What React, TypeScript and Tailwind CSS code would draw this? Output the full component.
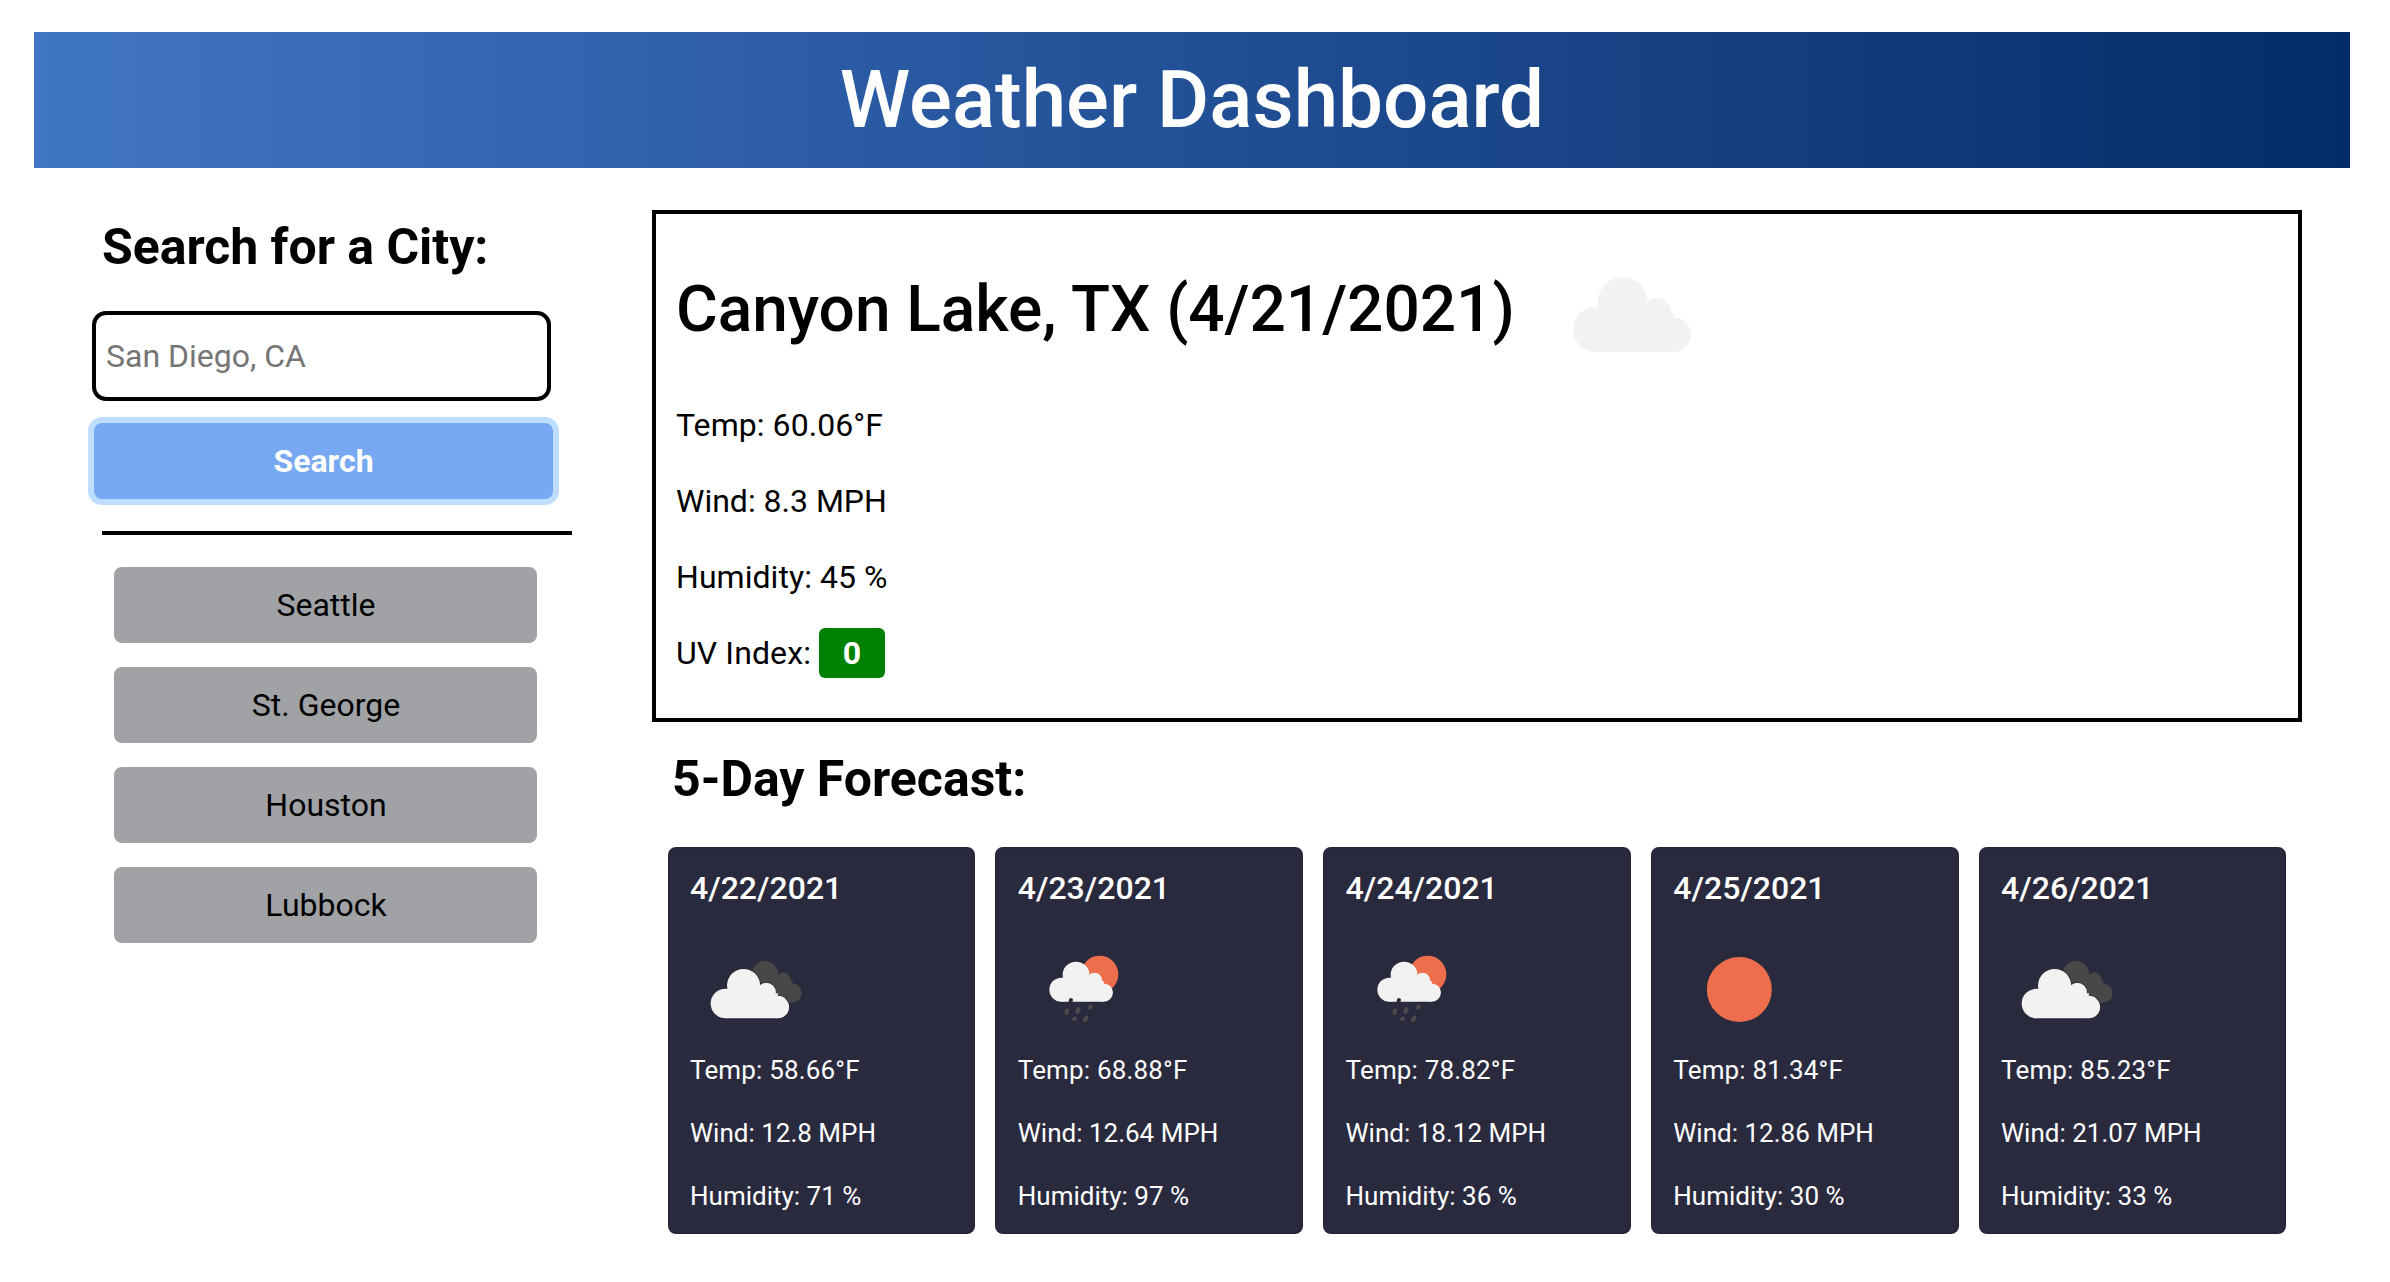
type Sky = 'clouds' | 'rain' | 'clear';

interface Day {
  date: string;
  sky: Sky;
  temp: string;
  wind: string;
  humidity: string;
}

const cities = ['Seattle', 'St. George', 'Houston', 'Lubbock'];

const forecast: Day[] = [
  { date: '4/22/2021', sky: 'clouds', temp: '58.66', wind: '12.8', humidity: '71' },
  { date: '4/23/2021', sky: 'rain', temp: '68.88', wind: '12.64', humidity: '97' },
  { date: '4/24/2021', sky: 'rain', temp: '78.82', wind: '18.12', humidity: '36' },
  { date: '4/25/2021', sky: 'clear', temp: '81.34', wind: '12.86', humidity: '30' },
  { date: '4/26/2021', sky: 'clouds', temp: '85.23', wind: '21.07', humidity: '33' },
];

// Cloud silhouette on a 355 x 224 grid.
function CloudShape() {
  return (
    <>
      <circle cx="67" cy="157" r="67" />
      <circle cx="149" cy="75" r="75" />
      <circle cx="252" cy="105" r="43" />
      <circle cx="304" cy="173" r="51" />
      <path d="M67 110H304V224H67Z" />
    </>
  );
}

function WeatherIcon({ sky }: { sky: Sky }) {
  return (
    <svg viewBox="0 0 396 327" className="block h-[109px] w-[132px]">
      {sky === 'clouds' && (
        <>
          <g fill="#484848" transform="translate(145 93) scale(.535 .555)">
            <CloudShape />
          </g>
          <g fill="#2b2b33" stroke="#2b2b33" strokeWidth="7" transform="translate(62 117) scale(.663 .66)">
            <circle cx="149" cy="75" r="75" />
            <circle cx="252" cy="105" r="43" />
            <circle cx="304" cy="173" r="51" />
          </g>
          <g fill="#f2f2f0" transform="translate(62 117) scale(.663 .66)">
            <CloudShape />
          </g>
        </>
      )}
      {sky === 'rain' && (
        <g transform="translate(38 0)">
          <circle cx="207" cy="133" r="56" fill="#ec6e4c" />
          <g fill="#f2f2f2" transform="translate(56 95) scale(.538 .536)">
            <CloudShape />
          </g>
          <g stroke="#4b4b4b" strokeWidth="12" strokeLinecap="round">
            <path d="M121 210L120 212" stroke="#2e2e2e" />
            <path d="M110 241L107 249" />
            <path d="M144 237L140 245" />
            <path d="M180 230L178 233" />
            <path d="M133 265L131 267" />
            <path d="M168 262L163 270" />
          </g>
        </g>
      )}
      {sky === 'clear' && <circle cx="199" cy="178.500" r="97.500" fill="#ec6e4c" />}
    </svg>
  );
}

export default function App() {
  return (
    <div className="h-[1282px] w-[2390px] overflow-hidden bg-white pt-8 pr-10 pl-[34px] font-['Roboto',sans-serif] text-[32px] text-black">
      <header className="flex h-[136px] items-center justify-center bg-linear-to-r from-[#4176c5] to-[#042c69]">
        <h1 className="text-[80px] leading-[94px] font-medium text-white">Weather Dashboard</h1>
      </header>

      <div className="flex">
        <aside className="w-[618px] pt-[49px] pl-[58px]">
          <h2 className="ml-[10px] text-[50px] leading-[60px] font-bold tracking-[-0.04px]">Search for a City:</h2>
          <input
            className="mt-[34px] block h-[90px] w-[459px] rounded-[14px] border-4 border-black bg-white px-[10px] placeholder:text-[#757575]"
            placeholder="San Diego, CA"
          />
          <button className="mt-[22px] ml-[2px] block h-[76px] w-[459px] rounded-lg bg-[#77a8f2] font-bold text-white ring-6 ring-[#bfdeff]">
            Search
          </button>
          <hr className="mt-8 ml-[10px] w-[470px] border-t-4 border-black" />
          <div className="mt-8 ml-[22px] flex w-[423px] flex-col gap-6">
            {cities.map((city) => (
              <button key={city} className="h-[76px] rounded-lg bg-[#a1a2a6] pl-px">
                {city}
              </button>
            ))}
          </div>
        </aside>

        <main className="w-[1650px] pt-[42px]">
          <section className="h-[512px] border-4 border-black pl-[20px]">
            <div className="flex h-[173px] items-center pt-[18px]">
              <h2 className="text-[64px] leading-[76px] font-medium tracking-[-0.04px]">Canyon Lake, TX (4/21/2021)</h2>
              <svg viewBox="0 0 355 224" className="mt-[10px] ml-[58px] h-[75px] w-[118px]" fill="#f2f2f0">
                <CloudShape />
              </svg>
            </div>
            <p className="leading-[76px] tracking-[0.06px]">Temp: 60.06°F</p>
            <p className="leading-[76px]">Wind: 8.3 MPH</p>
            <p className="leading-[76px] tracking-[0.05px]">Humidity: 45 %</p>
            <p className="flex h-[76px] items-center tracking-[0.1px]">
              UV Index:
              <span className="ml-2 flex h-[50px] w-[66px] items-center justify-center rounded-md bg-[#008000] font-bold text-white">
                0
              </span>
            </p>
          </section>

          <h2 className="mt-[27px] ml-5 text-[50px] leading-[60px] font-bold">5-Day Forecast:</h2>
          <div className="mt-[38px] ml-[15.5px] grid w-[1618.8px] grid-cols-5 gap-5">
            {forecast.map((day) => (
              <article
                key={day.date}
                className="h-[387px] rounded-lg border-2 border-[#282439] bg-[#2a2a3e] pt-5 pl-[20.5px] text-[26px] leading-[63px] text-white"
              >
                <h3 className="mb-[23px] text-[32px] leading-[38px] font-medium">{day.date}</h3>
                <WeatherIcon sky={day.sky} />
                <p className="tracking-[0.16px]">Temp: {day.temp}°F</p>
                <p>Wind: {day.wind} MPH</p>
                <p>Humidity: {day.humidity} %</p>
              </article>
            ))}
          </div>
        </main>
      </div>
    </div>
  );
}
